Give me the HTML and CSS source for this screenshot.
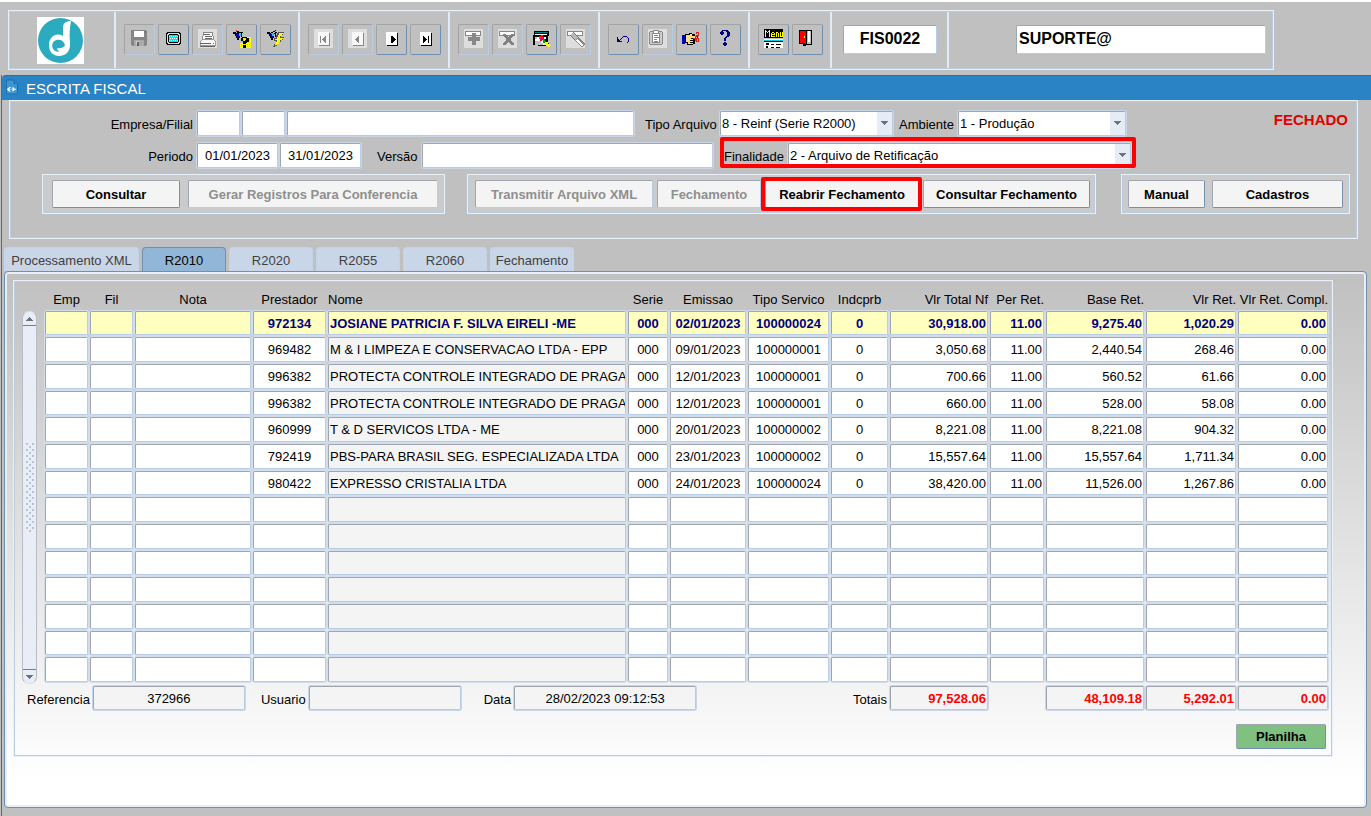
FILE: index.html
```html
<!DOCTYPE html>
<html lang="pt-BR">
  <head>
    <meta charset="utf-8" />
    <meta name="viewport" content="width=device-width, initial-scale=1" />
    <title>Escrita Fiscal</title>
    <link rel="stylesheet" href="styles.css">
  </head>
  <body>
    <header class="toolbar">
      <div class="tool-group logo-group">
        <svg class="logo" viewBox="0 0 47 47" role="img" aria-label="Logo">
          <rect width="47" height="47" fill="#fff" />
          <circle cx="23.500" cy="23.500" r="22.500" fill="#2babc0" />
          <path fill="#fff" d="M34 4C29 4 26 6 26 11V19C19 15 12 20 12 28C12 35 16 39 22 39C29 39 34 34 33 25C32 18 33 10 34 4Z" />
          <path fill="#2babc0" d="M23 23a6 6 0 1 0 1 11C27 33 28 31 28 28C27 25 25 23 23 23Z" />
          <path fill="#fff" d="M20 31C23 32 27 31 29 27L30 33L24 35C22 35 20 33 20 31Z" />
        </svg>
      </div>
      <div class="tool-group">
        <button class="tool off" aria-label="Salvar">
          <svg viewBox="0 0 19 19"><path fill="#868686" d="M1 1h15v1h1v14h-1v1H2v-1H1z" /><path fill="#fff" d="M4 2h10v6H4z" /><path fill="#aaa" d="M4 11h10v6H4z" /><path fill="#c8c8c8" d="M6 12h3v4H6z" /><path fill="#666" d="M7 13h2v4H7zM15 2h1v2h-1z" /></svg>
        </button>
        <button class="tool" aria-label="Tela">
          <svg viewBox="0 0 19 19"><path d="M3 3h13v1h1v11h-1v1H3v-1H2V4h1z" /><path fill="#ddd" d="M4 4h11v1h1v9h-1v1H4v-1H3V5h1z" /><path d="M5 5h9v1h1v7h-1v1H5v-1H4V6h1z" /><path fill="#00e8f0" d="M5 6h9v7H5z" /><path stroke="#fff" stroke-dasharray="1 1" d="M5 7.500h9M6 9.500h8M5 11.500h9" /></svg>
        </button>
        <button class="tool off" aria-label="Imprimir">
          <svg viewBox="0 0 19 19"><path fill="#dedede" d="M0 0h19v19H0z" /><path fill="#fff" stroke="#888" d="M5.500 3.500h9l1 7h-11z" /><path stroke="#666" d="M6 5.500h6M7 7.500h7M7 9.500h7" /><path fill="#f8f8f8" stroke="#999" d="M2.500 12.500l2-2h11l2 2v4h-15z" /><path stroke="#666" d="M2 14.500h11M2 17.500h15M15 14.500h1" /></svg>
        </button>
        <button class="tool" aria-label="Consultar ajuda">
          <svg viewBox="0 0 19 19">
            <defs><pattern id="dots" width="2" height="2" patternUnits="userSpaceOnUse"><path fill="#ff0" d="M0 0h2v1H1v1H0z" /></pattern></defs>
            <path d="M1 3h3v1h1V3h2v1h2V3h2v1h-1v4H9V5H8v4H7v2H5V9H4V7H3V5H1z" /><path fill="#e02020" d="M4 1h1v2H4z" /><path d="M5 2h2v1h2v1H7V3H5z" /><path fill="#00d8f0" d="M7 4h2v3H7z" /><path fill="#0000e0" d="M4 5h3v2h1v2H6v1H5V7H4z" />
            <path fill="url(#dots)" d="M12 8h7v11H8v-5h4z" /><path d="M10 8h5v1h2v4h-2v1h-1v1h-3v-3h2v-1h1V9h-3v3H9V9h1zM11 16h3v3h-3z" />
          </svg>
        </button>
        <button class="tool" aria-label="Executar">
          <svg viewBox="0 0 19 19"><path d="M1 3h3v1h1V3h2v1h2V3h2v1h-1v4H9V5H8v4H7v2H5V9H4V7H3V5H1zM7 2h2V1h1v1H9v1H7z" /><path fill="#00d8f0" d="M5 4h3v3H5z" /><path fill="#0000e0" d="M4 5h2v2h1v2H6v1H5V7H4z" /><path fill="#555" d="M12 3h6v1h-1v2h-2v2h3v1h-1v2h-2v2h-2v2h-2v2H9v1H7v-1h1v-2h2v-3H8V9h2V6h1V4h1z" /><path fill="#ff0" d="M13 4h4v1h-1v2h-2v2h3v1h-1v1h-2v2h-1v2h-2v1H9v-1h1v-2h1v-2H9v-1h2V8h1V6h1z" /></svg>
        </button>
      </div>
      <div class="tool-group">
        <button class="tool off" aria-label="Primeiro">
          <svg viewBox="0 0 19 19"><path fill="#dedede" d="M0 0h19v19H0z" /><path fill="#888" d="M5 4h11v13H5z" /><path fill="#f8f8f8" d="M4 3h11v13H4z" /><path fill="#888" d="M6 7h1v7H6zM11 7h1v7h-1v-1h-1v-1H9v-1H8v-1h1V9h1V8h1z" /></svg>
        </button>
        <button class="tool off" aria-label="Anterior">
          <svg viewBox="0 0 19 19"><path fill="#dedede" d="M0 0h19v19H0z" /><path fill="#888" d="M5 4h11v13H5z" /><path fill="#f8f8f8" d="M4 3h11v13H4z" /><path fill="#888" d="M10 7h1v7h-1v-1H9v-1H8v-1H7v-1h1V9h1V8h1z" /></svg>
        </button>
        <button class="tool" aria-label="Próximo">
          <svg viewBox="0 0 19 19"><path d="M5 4h11v13H5z" /><path fill="#fff" d="M4 3h11v13H4z" /><path d="M9 7h2v1h1v1h1v1h1v1h-1v1h-1v1h-1v1H9z" /></svg>
        </button>
        <button class="tool" aria-label="Último">
          <svg viewBox="0 0 19 19"><path d="M5 4h11v13H5z" /><path fill="#fff" d="M4 3h11v13H4z" /><path d="M7 7h1v1h1v1h1v1h1v1h-1v1H9v1H8v1H7zM12 7h1v7h-1z" /></svg>
        </button>
      </div>
      <div class="tool-group">
        <button class="tool off" aria-label="Inserir registro">
          <svg viewBox="0 0 19 19"><path fill="#dedede" d="M0 0h19v19H0z" /><path fill="#fff" stroke="#888" d="M1.500 2.500h15v4h-15z" /><path fill="#888" d="M8 4h4v4h4v4h-4v4H8v-4H4V8h4z" /></svg>
        </button>
        <button class="tool off" aria-label="Excluir registro">
          <svg viewBox="0 0 19 19"><path fill="#dedede" d="M0 0h19v19H0z" /><path fill="#fff" stroke="#888" d="M1.500 2.500h15v4h-15z" /><path fill="#808080" d="M5 5h3v1h1v1h1v1h1V7h1V6h1V5h3v2h-1v1h-1v1h-1v3h1v1h1v1h1v2h-3v-1h-1v-1h-1v-1h-1v1H9v1H8v1H5v-2h1v-1h1v-1h1V9H7V8H6V7H5z" /></svg>
        </button>
        <button class="tool" aria-label="Limpar">
          <svg viewBox="0 0 19 19"><path d="M2 2h15v5h-1v10H6v-1h5V8H3v8H1V6h1z" /><path fill="#008080" d="M3 3h13v1H3z" /><path fill="#fff" d="M3 5h12v1H3zM5 8h9v8h-3v-2H9v-2H5zM3 10h2v2H3z" /><path fill="#f00" d="M7 7h4v1h1v3h-2v1H8v-2H7z" /><path fill="#f0f" d="M7 8h2v2H7zM9 6h2v1H9z" /><path fill="#00a000" d="M11 10h3v3h-1v1h-2z" /><path d="M13 10h2v2h1v2h1v1h-4v-2h1v-1h-1z" /><path fill="#ff0" d="M13 13h3v2h2v3h-2v-1h-2v-2h-1z" /></svg>
        </button>
        <button class="tool off" aria-label="Limpar registro">
          <svg viewBox="0 0 19 19"><path fill="#dedede" d="M0 0h19v19H0z" /><path fill="#fff" stroke="#888" d="M1.500 2.500h15v4h-15z" /><path stroke="#777" stroke-width="5" d="M6 5l6 6" /><path stroke="#bbb" stroke-width="3" d="M6 5l6 6" /><path stroke="#888" stroke-width="5" d="M11 10l7 7" /><path stroke="#fff" stroke-width="2" d="M11 11l6 6" /></svg>
        </button>
      </div>
      <div class="tool-group">
        <button class="tool" aria-label="Desfazer">
          <svg viewBox="0 0 19 19"><path fill="#000080" d="M3 8h1v2h1v1h1v-1h1V9h1V8h1V7h4v1h1v1h1v4h-1v1h-1v-1h1V9h-1V8H9v1H8v1H7v1H6v1h2v1H3z" /></svg>
        </button>
        <button class="tool off" aria-label="Colar">
          <svg viewBox="0 0 19 19"><path fill="#dedede" d="M0 0h19v19H0z" /><path fill="#ccc" stroke="#888" d="M1.500 3.500l1-1h11l1 1v11l-1 1h-11l-1-1z" /><path fill="#fff" stroke="#888" d="M4.500 4.500h7v9h-7zM5.500 1.500h5v3h-5z" /><path stroke="#888" d="M6 6.500h4M6 8.500h5M6 10.500h3M6 12.500h4" /></svg>
        </button>
        <button class="tool" aria-label="Recortar">
          <svg viewBox="0 0 19 19"><path fill="#0000c0" d="M0 6h3v9H0z" /><path d="M3 5h4V4h3v1h3v2h3v3h-3v5h-2v1H5v-2H3z" /><path fill="#ffe080" d="M4 6h4V5h2v2h5v2h-4v6H6v-2H4z" /><path d="M9 9h3v1H9zM8 11h4v1H8zM8 13h3v1H8z" /><path fill="none" stroke="#e02020" d="M13.500 4.500h1v-1h2v3h-2v1h-1v3h1v-1h2v3h-2v-1h-1v-2M11 9.500h2" /></svg>
        </button>
        <button class="tool" aria-label="Ajuda">
          <svg viewBox="0 0 19 19"><path fill="#000080" d="M6 1h6v1h1v1h1v4h-1v1h-2v1h-1v3H8V9h1V8h1V7h1V3h-1V2H7v1h1v2H7v1H5V5H4V3h1V2h1zM8 13h2v1h1v2h-1v1H8v-1H7v-2h1z" /></svg>
        </button>
      </div>
      <div class="tool-group">
        <button class="tool" aria-label="Menu">
          <svg viewBox="0 0 19 19"><path d="M0 0h19v9H0z" /><path fill="none" stroke="#ff0" d="M1.500 8V1M2 2.500h1M3 3.500h1M4 2.500h1M5.500 8V1M7 5.500h3M7.500 4v4M9.500 3.500h-2M10.500 4v2M8 7.500h3M12.500 8V3M13 3.500h1M14.500 4v4M16.500 3v4M16 7.500h3M18.500 3v5" /><path fill="#fff" d="M0 10h19v9H0z" /><path stroke="#00d0f0" d="M0 11.500h19" /><path d="M0 12h19v1H0zM2 14h3v2H2zM7 15h3v1H7zM12 15h5v1h-5zM2 17h2v2H2zM7 18h3v1H7zM12 18h4v1h-4z" /></svg>
        </button>
        <button class="tool" aria-label="Sair">
          <svg viewBox="0 0 19 19"><path d="M1 1h13v15H8v1H5v-2H1z" /><path fill="#c0c0c0" d="M9 2h4v13H9z" /><path fill="#fff" d="M10 2h2v11h-2z" /><path fill="#f00" d="M2 2h6v13H7v-1H2z" /><path fill="#ff0" d="M6 7h1v2H6z" /></svg>
        </button>
      </div>
      <div class="tool-group code-group">
        <input class="code-field" type="text" value="FIS0022" aria-label="Programa">
      </div>
      <div class="tool-group user-group">
        <input class="user-field" type="text" value="SUPORTE@" aria-label="Usuário conectado">
      </div>
    </header>

    <main class="window">
      <h1 class="title-bar">
        <svg class="title-icon" viewBox="0 0 13 16"><path fill="#3d97d5" stroke="#1c6ba8" d="M.5.5h8l4 4v11H.5z" /><path fill="#2478b5" d="M8 1v4h4z" /><path fill="#fff" d="M2 9h1V8h2v1H4v3h1v1H3v-1H2v-1H1v-1h1zM5 10h1v1H5zM7 8h1v1h1v1h2v1H9v1H8v1H7z" /></svg>
        ESCRITA FISCAL
      </h1>

      <form class="filters">
        <div class="form-row">
          <label class="lead" for="empresa">Empresa/Filial</label>
          <input class="field w-code" id="empresa" type="text">
          <input class="field w-code" type="text" aria-label="Filial">
          <input class="field w-name" type="text" aria-label="Nome da empresa">
          <label class="label-tipo" for="tipo">Tipo Arquivo</label>
          <select class="field w-tipo" id="tipo"><option>8 - Reinf (Serie R2000)</option></select>
          <label class="label-ambiente" for="ambiente">Ambiente</label>
          <select class="field w-ambiente" id="ambiente"><option>1 - Produção</option></select>
          <strong class="status">FECHADO</strong>
        </div>
        <div class="form-row">
          <label class="lead" for="inicio">Periodo</label>
          <input class="field w-date" id="inicio" type="text" value="01/01/2023">
          <input class="field w-date" type="text" value="31/01/2023" aria-label="Fim do periodo">
          <label class="label-versao" for="versao">Versão</label>
          <input class="field w-versao" id="versao" type="text">
          <div class="finalidade">
            <label for="finalidade">Finalidade</label>
            <select class="field w-finalidade" id="finalidade"><option>2 - Arquivo de Retificação</option></select>
          </div>
        </div>
        <div class="actions">
          <div class="action-group query-group">
            <button type="button" class="btn w-consultar">Consultar</button>
            <button type="button" class="btn w-gerar" disabled>Gerar Registros Para Conferencia</button>
          </div>
          <div class="action-group send-group">
            <button type="button" class="btn w-transmitir" disabled>Transmitir Arquivo XML</button>
            <button type="button" class="btn w-fechamento" disabled>Fechamento</button>
            <div class="reabrir"><button type="button" class="btn w-reabrir">Reabrir Fechamento</button></div>
            <button type="button" class="btn w-consultar-fech">Consultar Fechamento</button>
          </div>
          <div class="action-group help-group">
            <button type="button" class="btn w-manual">Manual</button>
            <button type="button" class="btn w-cadastros">Cadastros</button>
          </div>
        </div>
      </form>

      <div class="tabs" role="tablist">
        <button class="tab tab-wide" role="tab">Processamento XML</button>
        <button class="tab active" role="tab" aria-selected="true">R2010</button>
        <button class="tab" role="tab">R2020</button>
        <button class="tab" role="tab">R2055</button>
        <button class="tab" role="tab">R2060</button>
        <button class="tab" role="tab">Fechamento</button>
      </div>

      <section class="tab-panel">
        <div class="records">
          <div class="grid-area">
            <div class="scrollbar">
              <button class="scroll-btn scroll-up" aria-label="Subir"><svg viewBox="0 0 7 4"><path fill="#6b7085" d="M3 0h1v1h1v1h1v1h1v1H0V3h1V2h1V1h1z" /></svg></button>
              <span class="grip"></span>
              <button class="scroll-btn scroll-down" aria-label="Descer"><svg viewBox="0 0 7 4"><path fill="#6b7085" d="M0 0h7v1H6v1H5v1H4v1H3V3H2V2H1V1H0z" /></svg></button>
            </div>
            <table class="grid">
              <colgroup>
                <col class="c-emp"><col class="c-emp"><col class="c-nota"><col class="c-prestador"><col class="c-nome">
                <col class="c-serie"><col class="c-emissao"><col class="c-servico"><col class="c-indcprb">
                <col class="c-valor"><col class="c-per"><col class="c-valor"><col class="c-ret"><col class="c-ret">
              </colgroup>
              <thead>
                <tr><th>Emp</th><th>Fil</th><th>Nota</th><th>Prestador</th><th>Nome</th><th>Serie</th><th>Emissao</th><th>Tipo Servico</th><th>Indcprb</th><th>Vlr Total Nf</th><th>Per Ret.</th><th>Base Ret.</th><th>Vlr Ret.</th><th>Vlr Ret. Compl.</th></tr>
              </thead>
              <tbody>
                <tr class="current"><td></td><td></td><td></td><td>972134</td><td>JOSIANE PATRICIA F. SILVA EIRELI -ME</td><td>000</td><td>02/01/2023</td><td>100000024</td><td>0</td><td>30,918.00</td><td>11.00</td><td>9,275.40</td><td>1,020.29</td><td>0.00</td></tr>
                <tr><td></td><td></td><td></td><td>969482</td><td>M &amp; I LIMPEZA E CONSERVACAO LTDA - EPP</td><td>000</td><td>09/01/2023</td><td>100000001</td><td>0</td><td>3,050.68</td><td>11.00</td><td>2,440.54</td><td>268.46</td><td>0.00</td></tr>
                <tr><td></td><td></td><td></td><td>996382</td><td>PROTECTA CONTROLE INTEGRADO DE PRAGA</td><td>000</td><td>12/01/2023</td><td>100000001</td><td>0</td><td>700.66</td><td>11.00</td><td>560.52</td><td>61.66</td><td>0.00</td></tr>
                <tr><td></td><td></td><td></td><td>996382</td><td>PROTECTA CONTROLE INTEGRADO DE PRAGA</td><td>000</td><td>12/01/2023</td><td>100000001</td><td>0</td><td>660.00</td><td>11.00</td><td>528.00</td><td>58.08</td><td>0.00</td></tr>
                <tr><td></td><td></td><td></td><td>960999</td><td>T &amp; D SERVICOS LTDA - ME</td><td>000</td><td>20/01/2023</td><td>100000002</td><td>0</td><td>8,221.08</td><td>11.00</td><td>8,221.08</td><td>904.32</td><td>0.00</td></tr>
                <tr><td></td><td></td><td></td><td>792419</td><td>PBS-PARA BRASIL SEG. ESPECIALIZADA LTDA</td><td>000</td><td>23/01/2023</td><td>100000002</td><td>0</td><td>15,557.64</td><td>11.00</td><td>15,557.64</td><td>1,711.34</td><td>0.00</td></tr>
                <tr><td></td><td></td><td></td><td>980422</td><td>EXPRESSO CRISTALIA LTDA</td><td>000</td><td>24/01/2023</td><td>100000024</td><td>0</td><td>38,420.00</td><td>11.00</td><td>11,526.00</td><td>1,267.86</td><td>0.00</td></tr>
                <tr><td></td><td></td><td></td><td></td><td></td><td></td><td></td><td></td><td></td><td></td><td></td><td></td><td></td><td></td></tr>
                <tr><td></td><td></td><td></td><td></td><td></td><td></td><td></td><td></td><td></td><td></td><td></td><td></td><td></td><td></td></tr>
                <tr><td></td><td></td><td></td><td></td><td></td><td></td><td></td><td></td><td></td><td></td><td></td><td></td><td></td><td></td></tr>
                <tr><td></td><td></td><td></td><td></td><td></td><td></td><td></td><td></td><td></td><td></td><td></td><td></td><td></td><td></td></tr>
                <tr><td></td><td></td><td></td><td></td><td></td><td></td><td></td><td></td><td></td><td></td><td></td><td></td><td></td><td></td></tr>
                <tr><td></td><td></td><td></td><td></td><td></td><td></td><td></td><td></td><td></td><td></td><td></td><td></td><td></td><td></td></tr>
                <tr><td></td><td></td><td></td><td></td><td></td><td></td><td></td><td></td><td></td><td></td><td></td><td></td><td></td><td></td></tr>
              </tbody>
            </table>
          </div>

          <div class="summary">
            <label for="referencia">Referencia</label>
            <input class="field w-ref" id="referencia" type="text" value="372966" readonly>
            <label class="label-usuario" for="usuario">Usuario</label>
            <input class="field w-ref" id="usuario" type="text" readonly>
            <label class="label-data" for="data">Data</label>
            <input class="field w-data" id="data" type="text" value="28/02/2023 09:12:53" readonly>
            <label class="label-totais" for="total-nf">Totais</label>
            <input class="field total w-total-nf" id="total-nf" type="text" value="97,528.06" readonly>
            <input class="field total w-total-base" type="text" value="48,109.18" aria-label="Total base" readonly>
            <input class="field total w-total-ret" type="text" value="5,292.01" aria-label="Total retido" readonly>
            <input class="field total w-total-ret" type="text" value="0.00" aria-label="Total complementar" readonly>
          </div>
          <button class="btn planilha">Planilha</button>
        </div>
      </section>
    </main>
  </body>
</html>
```
FILE: styles.css
```css
* {
  box-sizing: border-box;
}

body {
  display: flex;
  flex-direction: column;
  min-height: 100vh;
  margin: 0;
  padding-top: 8px;
  border-top: 2px solid #fff;
  background: #c0c0c0;
  color: #000;
  font-family: "Liberation Sans", Arial, sans-serif;
  font-size: 13px;
}

button,
input,
select {
  margin: 0;
  font: inherit;
  color: inherit;
}

/* toolbar */

.toolbar {
  display: flex;
  height: 60px;
  margin: 0 97px 5px 8px;
  border: 1px solid #e8f0fb;
  outline: 1px solid #b8cce4;
  outline-offset: -2px;
}

.tool-group {
  display: flex;
  align-items: center;
  justify-content: center;
  gap: 3px;
  padding: 0 7px 2px 8px;
  border-right: 2px solid #dfeafa;
}

.logo-group {
  width: 107px;
  padding: 0 6px 0 4px;
}

.logo {
  width: 47px;
  height: 47px;
}

.tool {
  display: flex;
  align-items: center;
  justify-content: center;
  width: 31px;
  height: 31px;
  padding: 0 0 2px;
  border: 1px solid;
  border-color: #a3a3a3 #6f8fb3 #6f8fb3 #a3a3a3;
  border-radius: 2px;
  background: none;
}

.tool.off {
  border-color: #a3a3a3 #b8cce4 #b8cce4 #a3a3a3;
}

.tool svg {
  width: 19px;
  height: 19px;
  flex: none;
  shape-rendering: crispEdges;
}

.code-group {
  width: 117px;
}

.user-group {
  flex: 1;
  justify-content: flex-end;
  border-right: 0;
}

.code-field,
.user-field {
  height: 29px;
  border: 1px solid;
  border-color: #a0a6b0 #b8cce4 #b8cce4 #a0a6b0;
  border-radius: 2px;
  background: #fff;
  font-size: 16px;
  font-weight: bold;
}

.code-field {
  width: 94px;
  padding: 0;
  text-align: center;
}

.user-field {
  width: 250px;
  padding: 0 2px;
}

/* window */

.window {
  display: flex;
  flex: 1;
  flex-direction: column;
  margin-left: 1px;
  padding-bottom: 8px;
  border-left: 1px solid #4a6a92;
}

.title-bar {
  display: flex;
  align-items: center;
  gap: 8px;
  height: 25px;
  margin: 0;
  padding-left: 4px;
  border-top: 1px solid #3d6796;
  border-top-left-radius: 4px;
  background: #2a83c5;
  color: #fff;
  font-size: 15px;
  font-weight: normal;
}

.title-icon {
  width: 12px;
  height: 16px;
  margin-bottom: 3px;
}

/* filters */

.filters {
  height: 139px;
  margin: 0 13px 8px 7px;
  padding: 10px 7px 0 0;
  border: 1px solid #e8f0fb;
  outline: 1px solid #b8cce4;
  outline-offset: -2px;
}

.form-row {
  display: flex;
  align-items: center;
  height: 25px;
  margin-bottom: 7px;
}

.form-row label,
.summary label {
  padding-top: 2px;
}

.field {
  height: 25px;
  padding: 0 2px;
  border: 1px solid;
  border-color: #a0a6b0 #b8cce4 #b8cce4 #a0a6b0;
  border-radius: 2px;
  background: #fff;
  box-shadow: 0 0 0 1px #c9d6e8;
  outline: 0;
}

.form-row .field {
  margin-right: 2px;
}

.field[readonly] {
  background: #f4f4f4;
  text-align: center;
}

select.field {
  appearance: none;
  padding: 0 1px;
  background: #fff url("data:image/svg+xml,%3Csvg xmlns='http://www.w3.org/2000/svg' width='15' height='25'%3E%3Cpath fill='%23e6ecf6' d='M0 0h15v25H0z'/%3E%3Cpath fill='%236b7085' d='M4 10h7v1h-1v1H9v1H8v1H7v-1H6v-1H5v-1H4z'/%3E%3C/svg%3E") no-repeat right center;
}

.lead {
  width: 187px;
  padding-right: 4px;
  text-align: right;
}

.w-code {
  width: 43px;
}

.w-name {
  width: 347px;
}

.label-tipo {
  width: 84px;
  padding-left: 9px;
}

.w-tipo {
  width: 173px;
}

.label-ambiente {
  width: 63px;
  padding-left: 4px;
}

.w-ambiente {
  width: 168px;
}

.status {
  align-self: flex-start;
  margin: 0 2px 0 auto;
  color: #e00000;
  font-size: 15px;
}

.w-date {
  width: 81px;
  text-align: center;
}

.label-versao {
  width: 59px;
  padding-left: 14px;
}

.w-versao {
  width: 291px;
}

.finalidade {
  display: flex;
  position: relative;
  align-items: center;
  gap: 4px;
  padding-left: 9px;
}

/* red marker drawn over the field */
.finalidade::after,
.reabrir::after {
  content: "";
  position: absolute;
  border: 4px solid #f00;
  border-radius: 2px;
  pointer-events: none;
}

.finalidade::after {
  inset: -6px -3px 0 5px;
}

.w-finalidade {
  width: 343px;
}

.actions {
  display: flex;
  margin-top: -1px;
  padding-left: 32px;
}

.action-group {
  display: flex;
  align-items: center;
  height: 40px;
  padding: 0 6px 0 9px;
  border: 1px solid #e8f0fb;
  outline: 1px solid #b8cce4;
  outline-offset: -2px;
  background: #cbcbcb;
}

.query-group {
  gap: 8px;
}

.send-group {
  gap: 4px;
  margin-left: 22px;
  padding: 0 5px 0 7px;
}

.help-group {
  gap: 7px;
  margin-left: auto;
  padding: 0 6px;
}

.btn {
  height: 28px;
  padding: 0;
  border: 1px solid;
  border-color: #a0a6b0 #6f8fb3 #6f8fb3 #a0a6b0;
  border-radius: 2px;
  background: #f4f4f4;
  font-weight: bold;
  white-space: nowrap;
}

.btn:disabled {
  border-color: #a0a6b0 #b8cce4 #b8cce4 #a0a6b0;
  color: #8f8f8f;
}

.w-consultar {
  width: 128px;
}

.w-gerar {
  width: 250px;
}

.w-transmitir {
  width: 178px;
}

.w-fechamento {
  width: 104px;
}

.w-reabrir {
  width: 154px;
}

.w-consultar-fech {
  width: 167px;
}

.w-manual {
  width: 77px;
}

.w-cadastros {
  width: 131px;
}

.reabrir {
  position: relative;
}

.reabrir::after {
  inset: -3px -3px -3px -4px;
}

/* tabs */

.tabs {
  display: flex;
  gap: 3px;
  padding-left: 2px;
}

.tab {
  width: 84px;
  height: 24px;
  padding: 2px 0 0;
  border: 1px solid #c3d3e8;
  border-bottom: 0;
  border-radius: 4px 4px 0 0;
  background: #c8d6e8;
  color: #404040;
}

.tab-wide {
  width: 135px;
}

.tab.active {
  border-color: #6f8fb3;
  background: #92b6d8;
  color: #000;
}

.tab-panel {
  flex: 1;
  margin: 0 4px 0 2px;
  padding: 8px 33px 0 8px;
  border: 1px solid #6f8fb3;
  border-radius: 4px;
  box-shadow: inset 0 0 0 2px #e8eef7;
  background: linear-gradient(#c0c0c0, #fff 95%);
}

.records {
  display: flex;
  flex-direction: column;
  height: 477px;
  border: 1px solid #e8f0fb;
  outline: 1px solid #b8cce4;
  outline-offset: -2px;
}

.grid-area {
  display: flex;
  gap: 6px;
  padding: 2px 2px 0 8px;
}

.scrollbar {
  display: flex;
  flex: none;
  flex-direction: column;
  justify-content: space-between;
  width: 15px;
  margin-top: 28px;
  border: 1px solid #b8cce4;
  border-color: #d4e0f0 #b8bcc4;
  border-radius: 7px;
  background: #e8edf6;
}

.scroll-btn {
  display: flex;
  align-items: center;
  justify-content: center;
  height: 14px;
  padding: 0;
  border: 0 solid #6f8097;
  background: none;
}

.scroll-up {
  border-bottom-width: 1px;
}

.scroll-down {
  border-top-width: 1px;
}

.scroll-btn svg {
  width: 7px;
  height: 4px;
}

.grip {
  width: 9px;
  height: 90px;
  margin: 0 0 20px 3px;
  background: radial-gradient(circle at 1px 1px, #b9c4d6 1px, transparent 1px) 0 0 / 6px 6px,
    radial-gradient(circle at 4px 4px, #b9c4d6 1px, transparent 1px) 0 0 / 6px 6px;
}

.grid {
  flex: 1;
  width: 100%;
  table-layout: fixed;
  border-spacing: 2px;
}

.c-emp {
  width: 43px;
}

.c-nota {
  width: 116px;
}

.c-prestador {
  width: 73px;
}

.c-serie {
  width: 40px;
}

.c-emissao {
  width: 76px;
}

.c-servico {
  width: 81px;
}

.c-indcprb {
  width: 57px;
}

.c-valor {
  width: 98px;
}

.c-per {
  width: 54px;
}

.c-ret {
  width: 90px;
}

.grid th {
  height: 24px;
  padding: 4px 0 0;
  font-weight: normal;
  white-space: nowrap;
}

.grid td {
  height: 25px;
  padding: 0 1px;
  overflow: hidden;
  border: 1px solid;
  border-color: #a0a6b0 #b8cce4 #b8cce4 #a0a6b0;
  border-radius: 2px;
  background: #fff;
  box-shadow: 0 0 0 1px #d3deed;
  text-align: center;
  white-space: nowrap;
}

.grid tr:nth-child(3n + 1) td {
  height: 24px;
}

.grid td:nth-child(5) {
  background: #f4f4f4;
}

.grid tr > :nth-child(5) {
  text-align: left;
}

.grid tr > :nth-child(n + 10) {
  text-align: right;
}

.grid .current td {
  background: #ffffc0;
  color: #000080;
  font-weight: bold;
}

/* summary */

.summary {
  display: flex;
  align-items: center;
  gap: 3px;
  padding: 2px 4px 0 13px;
}

.summary .field {
  height: 24px;
}

.w-ref {
  width: 152px;
}

.label-usuario {
  margin-left: 13px;
}

.label-data {
  margin-left: 20px;
}

.w-data {
  width: 182px;
}

.label-totais {
  margin-left: auto;
}

.summary .total {
  margin-left: -1px;
  padding: 0 1px;
  color: #f00;
  font-weight: bold;
  text-align: right;
}

.summary .w-total-nf {
  width: 98px;
  margin: 0 56px 0 0;
}

.w-total-base {
  width: 98px;
}

.w-total-ret {
  width: 90px;
}

.planilha {
  align-self: flex-end;
  width: 90px;
  height: 25px;
  margin: 14px 6px 0 0;
  background: #80c080;
}
```
